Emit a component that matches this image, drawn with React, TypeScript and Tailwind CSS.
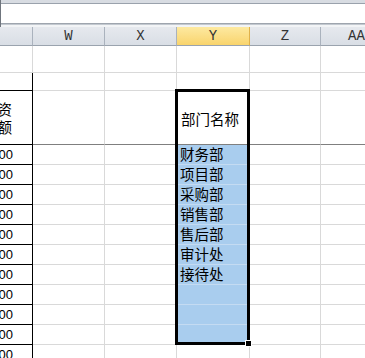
import React from 'react';

const columns = [
  { key: 'V', label: '', width: 'w-[33px]' },
  { key: 'W', label: 'W', width: 'w-[72px]' },
  { key: 'X', label: 'X', width: 'w-[72px]' },
  { key: 'Y', label: 'Y', width: 'w-[73px]' },
  { key: 'Z', label: 'Z', width: 'w-[71px]' },
  { key: 'AA', label: 'AA', width: 'w-[72px]' },
];

const depts = ['财务部', '项目部', '采购部', '销售部', '售后部', '审计处', '接待处', '', '', ''];

// row heights below the header: two spacer rows, the title row, then data rows
const rowHeights = ['h-[27px]', 'h-[18px]', 'h-[54px]', ...Array(11).fill('h-[20px]')];

const cjk = { fontFamily: '"Noto Sans CJK SC", "Noto Sans", sans-serif' };

function Cell({ col, row }: { col: string; row: number }) {
  const h = rowHeights[row];
  const isData = row >= 3;
  const dataIdx = row - 3;

  if (col === 'V') {
    if (row === 0) return <div className={`${h} border-b border-r border-[#d9d9d9]`} />;
    if (row === 1) return <div className={`${h} border-b border-r border-black`} />;
    if (row === 2)
      return (
        <div className={`${h} border-b border-r border-black overflow-hidden flex items-center`}>
          <div className="-ml-[19px] w-[31px] text-right text-[14.5px] leading-[18px] text-black" style={cjk}>
            投资<br />金额
          </div>
        </div>
      );
    return (
      <div className={`${h} border-b border-r border-black overflow-hidden flex items-center`}>
        <div className="-ml-[18px] w-[31px] text-right text-[13px] leading-[19px] text-black font-['Liberation_Sans',sans-serif]">
          1000
        </div>
      </div>
    );
  }

  if (col === 'Y') {
    if (row === 2)
      return (
        <div className={`${h} border-b border-r border-[#7f7f7f] bg-white flex items-center pl-[4px] pt-[3px]`}>
          <span className="text-[14.5px] text-black leading-none" style={cjk}>部门名称</span>
        </div>
      );
    if (isData && dataIdx < depts.length)
      return (
        <div className={`${h} border-b border-r border-[#c4dbf2] bg-[#a9cdee] flex items-center pl-[3px]`}>
          <span className="text-[14.5px] text-black leading-none" style={cjk}>{depts[dataIdx]}</span>
        </div>
      );
  }

  if (row === 2) return <div className={`${h} border-b border-r border-b-[#7f7f7f] border-r-[#d9d9d9]`} />;
  return <div className={`${h} border-b border-r border-[#d9d9d9]`} />;
}

export default function App() {
  return (
    <div className="w-[365px] h-[358px] overflow-hidden bg-white">
      <div className="border-l border-[#6f757d]">
        <div className="h-[3px] bg-[#d8dce2]" />
        <div className="h-px bg-[#9aa2ac]" />
        <div className="h-[19px] bg-white" />
        <div className="h-px bg-[#9ea5ae]" />
        <div className="h-px bg-[#c3c9d0]" />
        <div className="h-[2px] bg-[#f2f4f6]" />
      </div>

      <div className="relative flex">
        {columns.map((c) => (
          <div key={c.key} className={`${c.width} shrink-0 flex flex-col`}>
            {c.key === 'Y' ? (
              <div className="h-[19px] border-b border-r border-b-[#9aa3ae] border-r-[#e0b14a] bg-gradient-to-b from-[#fde9a0] to-[#f9d46c] flex items-center justify-center text-[14px] text-[#333] font-['Liberation_Mono',monospace]">
                {c.label}
              </div>
            ) : (
              <div className="h-[19px] border-b border-r border-b-[#9aa3ae] border-r-[#aab2bd] bg-gradient-to-b from-[#e6e9ee] to-[#d9dee5] flex items-center justify-center text-[14px] text-[#333] font-['Liberation_Mono',monospace]">
                {c.label}
              </div>
            )}
            {rowHeights.map((_, r) => (
              <Cell key={r} col={c.key} row={r} />
            ))}
          </div>
        ))}

        {/* selection frame over column Y */}
        <div className="absolute left-[175px] top-[62px] w-[75px] h-[256px] border-[3px] border-black pointer-events-none" />
        <div className="absolute left-[245px] top-[313px] w-[7px] h-[7px] bg-black border border-white" />
      </div>
    </div>
  );
}
